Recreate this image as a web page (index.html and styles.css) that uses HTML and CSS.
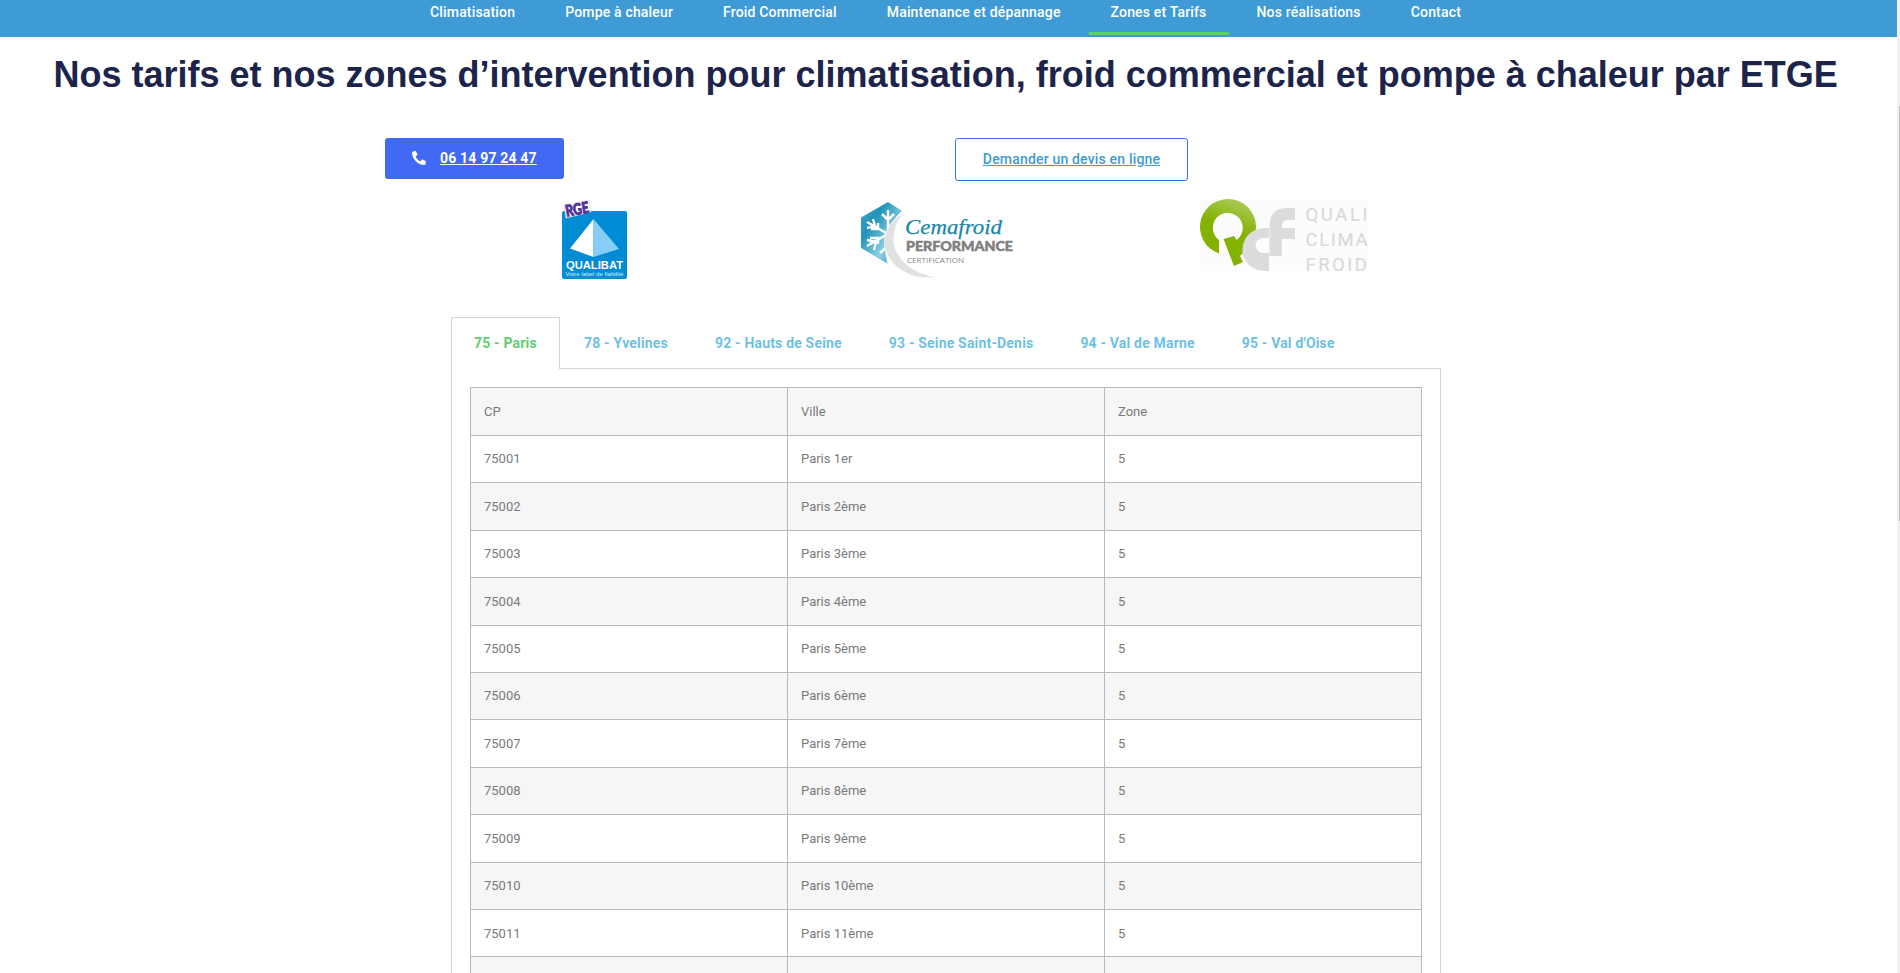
FILE: index.html
```
<!DOCTYPE html>
<html lang="fr">
<head>
<meta charset="utf-8">
<title>Zones et Tarifs</title>
<link rel="stylesheet" href="styles.css">
</head>
<body>
<div class="page">
  <nav class="nav">
    <a class="nav-item">Climatisation</a>
    <a class="nav-item">Pompe à chaleur</a>
    <a class="nav-item">Froid Commercial</a>
    <a class="nav-item">Maintenance et dépannage</a>
    <a class="nav-item active">Zones et Tarifs</a>
    <a class="nav-item">Nos réalisations</a>
    <a class="nav-item">Contact</a>
  </nav>
  <h1 class="title">Nos tarifs et nos zones d’intervention pour climatisation, froid commercial et pompe à chaleur par ETGE</h1>
  <div class="actions">
    <div class="action"><a class="btn btn-call"><svg class="phone" viewBox="0 0 512 512"><path fill="#fff" d="M493.4 24.6l-104-24c-11.3-2.600-22.900 3.300-27.500 13.900l-48 112c-4.200 9.800-1.400 21.300 6.900 28l60.600 49.600c-36 76.700-98.900 140.500-177.200 177.200l-49.600-60.600c-6.800-8.300-18.200-11.100-28-6.900l-112 48C3.900 366.500-2 378.100.6 389.400l24 104C27.100 504.200 36.700 512 48 512c256.100 0 464-207.500 464-464 0-11.200-7.700-20.900-18.600-23.400z"/></svg><span>06 14 97 24 47</span></a></div>
    <div class="action"><a class="btn btn-quote">Demander un devis en ligne</a></div>
  </div>
  <div class="logos">
    <svg class="logo" width="110" height="100" viewBox="0 0 110 100">
      <rect x="22" y="21" width="65" height="68" rx="2" fill="#008bd5"/>
      <path d="M53.500 29L30 58.500 53.500 67z" fill="#fff"/>
      <path d="M53.500 29L79 59 53.500 67z" fill="#86cef7"/>
      <path d="M24 15L49 10 51 22 26 28z" fill="#fff" stroke="#d5d5dc" stroke-width=".6"/>
      <text x="26.500" y="26.500" transform="rotate(-10 26.500 26.500)" font-family="Lato" font-weight="900" font-size="15.500" textLength="23.500" lengthAdjust="spacingAndGlyphs" fill="#55359a" stroke="#55359a" stroke-width="1">RGE</text>
      <text x="26" y="79" font-family="Liberation Sans" font-weight="700" font-size="10.500" textLength="57" lengthAdjust="spacingAndGlyphs" fill="#fff">QUALIBAT</text>
      <text x="25.500" y="85.500" font-family="Liberation Sans" font-size="5" textLength="58" lengthAdjust="spacingAndGlyphs" fill="#d9effb">Votre label de fiabilité</text>
    </svg>
    <svg class="logo" width="190" height="100" viewBox="0 0 190 100">
      <defs>
        <linearGradient id="ice" x1="0" y1="0" x2="1" y2="1"><stop offset="0" stop-color="#48a9c6"/><stop offset=".3" stop-color="#2193b8"/><stop offset=".65" stop-color="#8fd0e3"/><stop offset="1" stop-color="#1586aa"/></linearGradient>
        <clipPath id="hex"><path d="M21 27.500L48 12 62 21Q38 42 48 74L21 58z"/></clipPath>
      </defs>
      <path d="M21 27.500L48 12 62 21Q38 42 48 74L21 58z" fill="url(#ice)"/>
      <g clip-path="url(#hex)" stroke="#fff" stroke-width="2.500" fill="none">
        <path d="M48 20V74M27 32L60 51M27 56L60 37M42 24l6 6 6-6M33 29l2 7-8 2M27 50l9 2-2 8M40 63l8-7 6 7M38 33v6h-7M38 54v-6h-8"/>
      </g>
      <path d="M66 22C43 32 38 57 53 73C64 85 80 90 96 87C72 84 51 66 54 46C55 36 58 28 66 22z" fill="#e1e1e1" stroke="#fff" stroke-width=".6"/>
      <text x="65" y="44" font-family="Liberation Serif" font-style="italic" font-size="22" textLength="97" lengthAdjust="spacingAndGlyphs" fill="#1887a6" stroke="#1887a6" stroke-width=".25">Cemafroid</text>
      <text x="66" y="61" font-family="Lato" font-weight="900" font-size="13.500" textLength="107" lengthAdjust="spacingAndGlyphs" fill="#808080" stroke="#808080" stroke-width=".5">PERFORMANCE</text>
      <text x="67" y="72.500" font-family="Open Sans" font-size="7" textLength="57" lengthAdjust="spacingAndGlyphs" fill="#858585">CERTIFICATION</text>
    </svg>
    <svg class="logo" width="210" height="105" viewBox="0 0 210 105">
      <defs><linearGradient id="leaf" x1=".65" y1="0" x2=".45" y2=".5"><stop offset="0" stop-color="#a9ca58"/><stop offset="1" stop-color="#84b200"/></linearGradient></defs>
      <rect x="20" y="14" width="168" height="72" fill="#fcfcfc"/>
      <path d="M39 68.500A28 28 0 1 1 75.700 46L69 62 64 69 55 56A15 15 0 1 0 39 55z" fill="url(#leaf)"/>
      <path d="M43.500 54L54 51 58 57 63 68 60 71 63 77 54 81z" fill="#84b200"/>
      <path d="M89 43H84A21.500 21.500 0 0 0 84 86H89V68H83A7.500 7.500 0 0 1 83 53H89z" fill="#dcdcdc"/>
      <path d="M89.500 71V40Q90 23 107 23H115V35H107Q102 35 102 43H115V54H102V71z" fill="#dcdcdc"/>
      <g font-family="Roboto" font-size="18.500" fill="#dadada" stroke="#dadada" stroke-width=".2">
        <text x="125.500" y="36" textLength="62">QUALI</text>
        <text x="125.500" y="61" textLength="62">CLIMA</text>
        <text x="125.500" y="85.500" textLength="61.500">FROID</text>
      </g>
    </svg>
  </div>
  <section class="zones">
    <div class="tabs">
      <div class="tab current">75 - Paris</div>
      <div class="tab">78 - Yvelines</div>
      <div class="tab">92 - Hauts de Seine</div>
      <div class="tab">93 - Seine Saint-Denis</div>
      <div class="tab">94 - Val de Marne</div>
      <div class="tab">95 - Val d'Oise</div>
      <div class="tab-fill"></div>
    </div>
    <div class="panel">
      <div class="table">
        <div class="row head"><div>CP</div><div>Ville</div><div>Zone</div></div>
        <div class="row"><div>75001</div><div>Paris 1er</div><div>5</div></div>
        <div class="row"><div>75002</div><div>Paris 2ème</div><div>5</div></div>
        <div class="row"><div>75003</div><div>Paris 3ème</div><div>5</div></div>
        <div class="row"><div>75004</div><div>Paris 4ème</div><div>5</div></div>
        <div class="row"><div>75005</div><div>Paris 5ème</div><div>5</div></div>
        <div class="row"><div>75006</div><div>Paris 6ème</div><div>5</div></div>
        <div class="row"><div>75007</div><div>Paris 7ème</div><div>5</div></div>
        <div class="row"><div>75008</div><div>Paris 8ème</div><div>5</div></div>
        <div class="row"><div>75009</div><div>Paris 9ème</div><div>5</div></div>
        <div class="row"><div>75010</div><div>Paris 10ème</div><div>5</div></div>
        <div class="row"><div>75011</div><div>Paris 11ème</div><div>5</div></div>
        <div class="row"><div></div><div></div><div></div></div>
      </div>
    </div>
  </section>
</div>
<div class="scrollbar"><div class="thumb"></div></div>
</body>
</html>
```
FILE: styles.css
```
* { box-sizing: border-box; }
body {
  margin: 0;
  height: 973px;
  overflow: hidden;
  display: flex;
  background: #fff;
  font-family: Roboto, "Liberation Sans", sans-serif;
}
.page { width: 1897px; height: 973px; overflow: hidden; }
.scrollbar { width: 3px; height: 973px; padding: 106px 0 0 2px; background: #f1f1f1; }
.thumb { height: 415px; background: #c1c1c1; }

.nav {
  display: flex;
  gap: 6px;
  height: 37px;
  padding-left: 408px;
  background: #3f9bd5;
}
.nav-item {
  height: 35px;
  padding: 2px 22px 0;
  font-size: 14px;
  font-weight: 500;
  line-height: 20px;
  letter-spacing: .17px;
  color: #fff;
  white-space: nowrap;
}
.nav-item.active { border-bottom: 3px solid #61ce70; }

.title {
  margin: 0;
  height: 101px;
  padding: 18px 0 0 53.5px;
  font: 700 36px/40px "Liberation Sans", Arial, sans-serif;
  color: #1c244b;
  white-space: nowrap;
}

.actions { display: flex; height: 52px; padding-left: 385px; }
.action { width: 570px; }
.btn { display: inline-flex; align-items: center; border-radius: 3px; font-size: 14px; letter-spacing: .18px; text-decoration: underline; white-space: nowrap; }
.btn-call { width: 179px; height: 41px; padding: 0 0 1px 27px; gap: 14px; background: #4069f4; color: #fff; font-weight: 700; }
.phone { width: 14px; height: 14px; transform: scaleX(-1); }
.btn-quote { width: 233px; height: 43px; padding-bottom: 2px; justify-content: center; border: 1px solid #3a73e0; color: #3f9bd5; font-weight: 500; }

.logos { display: grid; grid-template-columns: 110px 190px 210px; column-gap: 190px; height: 127px; padding-left: 540px; }
.logos .logo:nth-child(3) { margin: -5px 0 0 -40px; }

.zones { width: 990px; margin-left: 451px; }
.tabs { display: flex; height: 52px; }
.tab {
  padding: 0 23px 0 24px;
  border-bottom: 1px solid #d4d4d4;
  font-size: 14px;
  font-weight: 700;
  line-height: 53px;
  letter-spacing: .18px;
  color: #6ec1e4;
  white-space: nowrap;
}
.tab.current { width: 109px; padding: 0 0 0 22px; line-height: 51px; border: 1px solid #d4d4d4; border-bottom: 0; color: #61ce70; }
.tab-fill { flex: 1; border-bottom: 1px solid #d4d4d4; }
.panel { height: 640px; padding: 18px 18px 0; border: 1px solid #d4d4d4; border-top: 0; }
.table { width: 952px; border-top: 1px solid #bababa; border-left: 1px solid #bababa; }
.row { display: grid; grid-template-columns: 317px 317px 317px; grid-template-rows: 100%; height: 47.4px; }
.row > div { padding-left: 13px; border-right: 1px solid #bababa; border-bottom: 1px solid #bababa; font-size: 13px; line-height: 46px; color: #7a7a7a; }
.row:nth-child(odd) { background: #f6f6f6; }
.row.head { height: 48px; }
.row.head > div { line-height: 48px; }
.row:is(:nth-child(3), :nth-child(5), :nth-child(8), :nth-child(10), :nth-child(12)) > div { padding-top: 1px; }
```
